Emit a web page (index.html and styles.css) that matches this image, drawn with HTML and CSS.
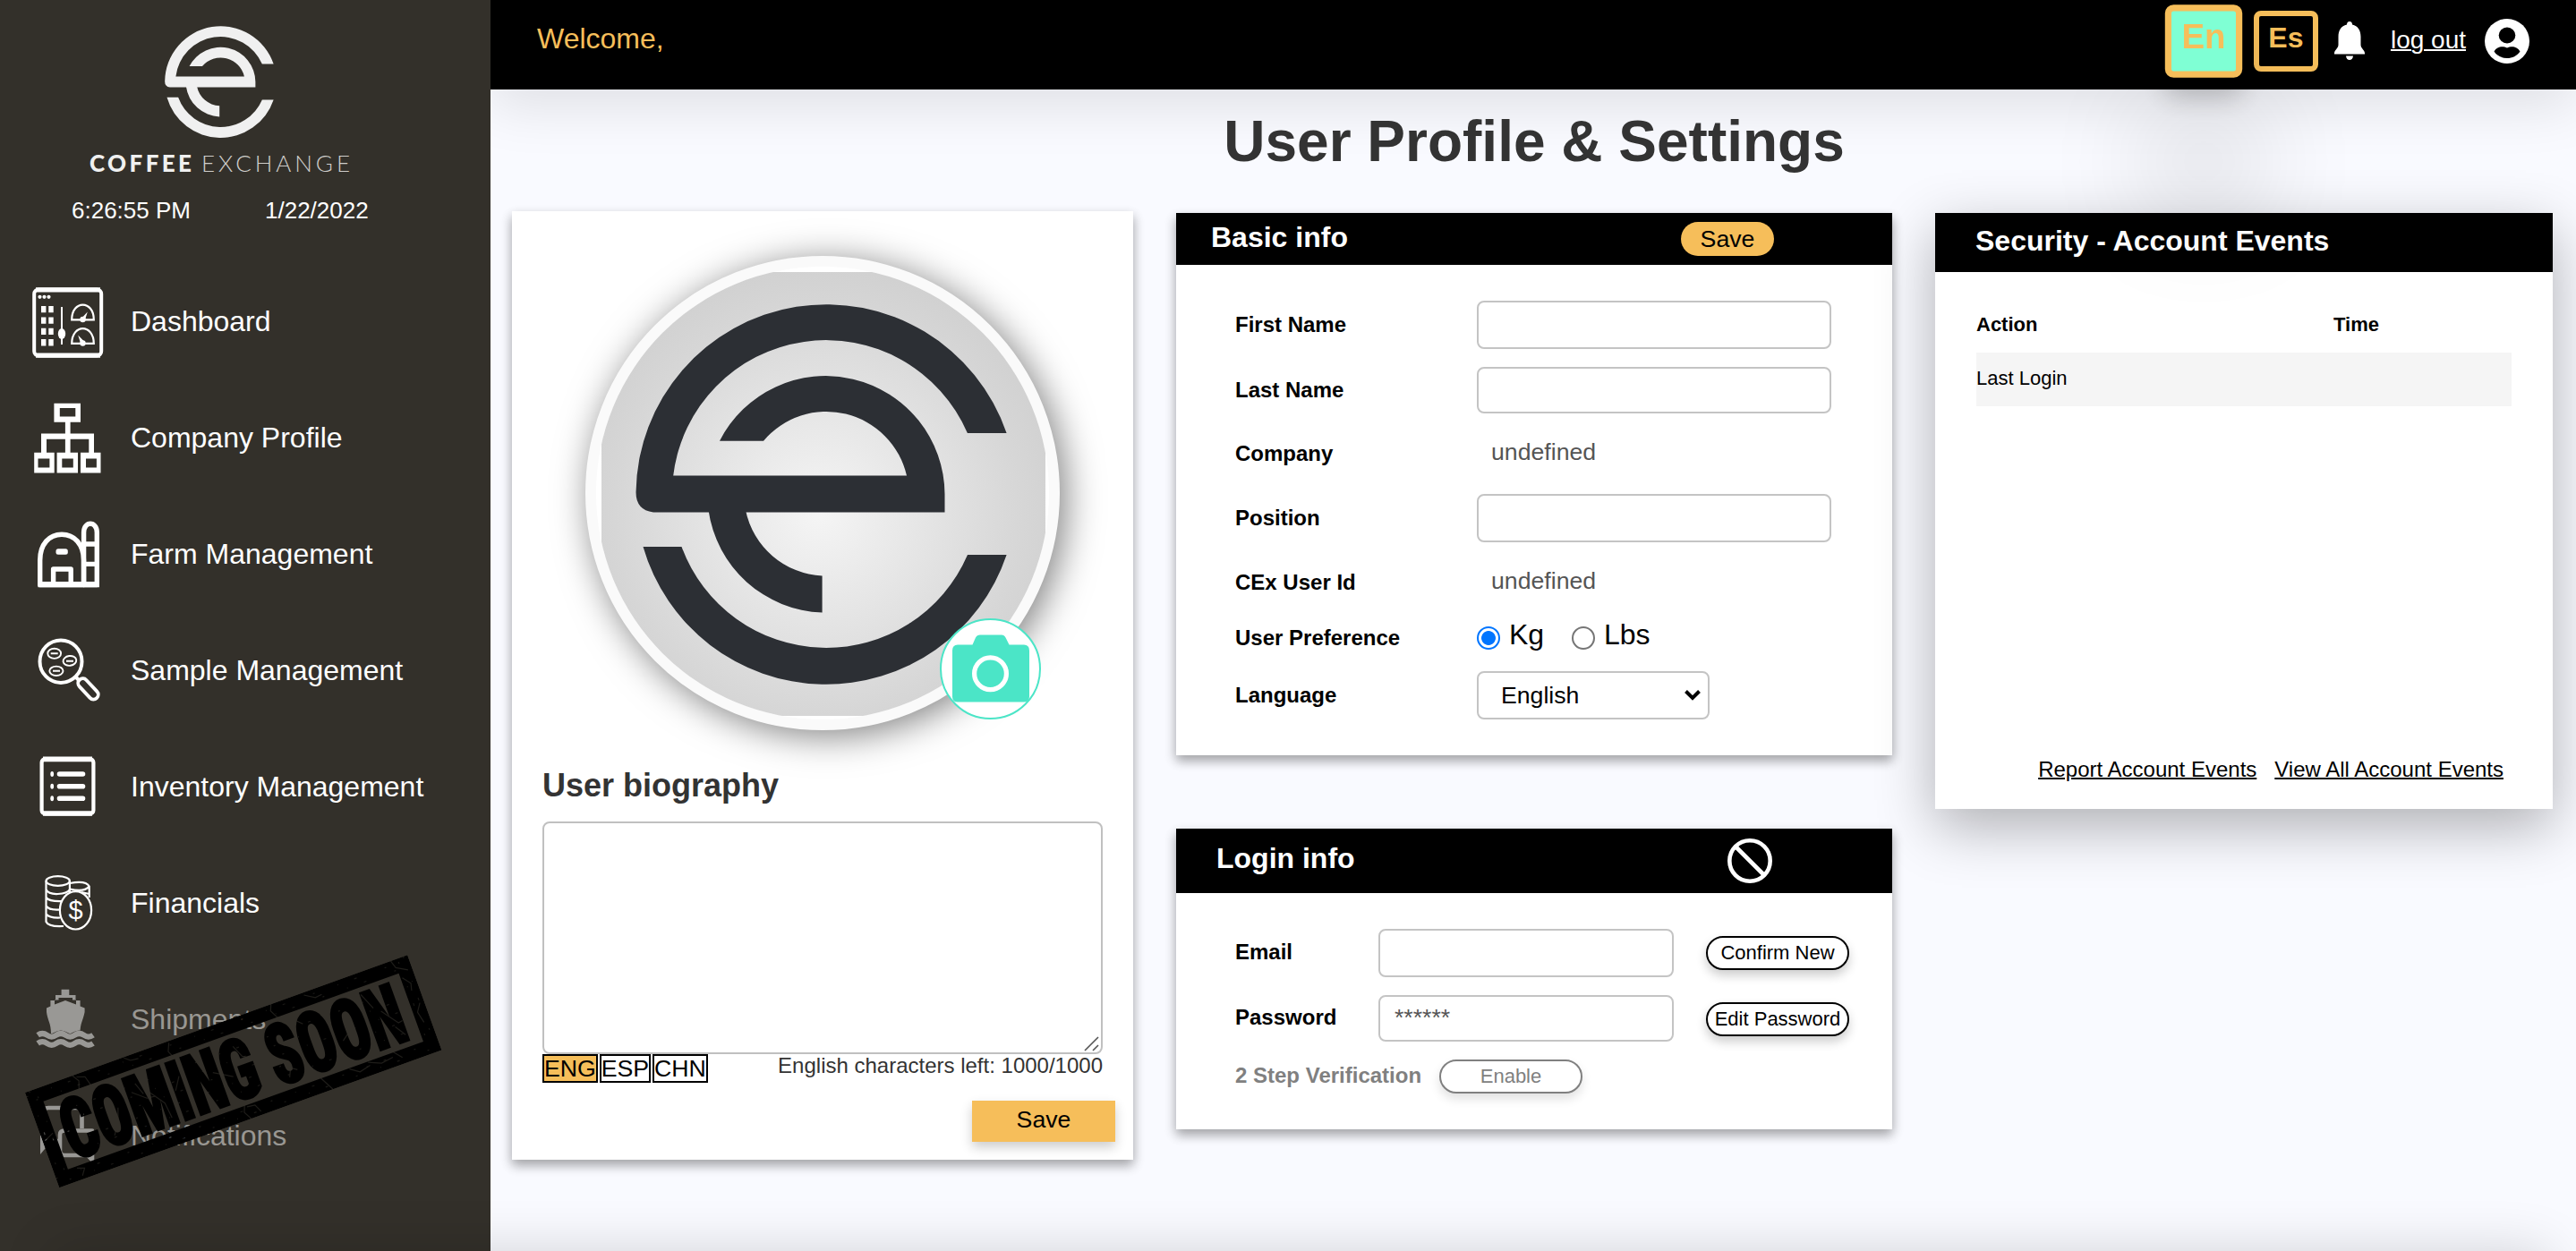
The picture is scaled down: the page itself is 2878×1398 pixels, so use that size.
FILE: index.html
```html
<!DOCTYPE html>
<html lang="en">
<head>
<meta charset="utf-8">
<title>User Profile &amp; Settings</title>
<link rel="stylesheet" href="styles.css">
</head>
<body>
<svg class="defs" width="0" height="0" aria-hidden="true">
  <symbol id="mark" viewBox="-213 -213 426 426">
    <path d="M201.6-68H157.9A172 172 0 0 0-170.8-20.5H90A92 92 0 0 0-70-59.3H-119A133 133 0 0 1 132.5 0V20.5H-193Q-212.5 18-212.5-2A212.8 212.8 0 0 1 201.6-68Z"/>
    <path d="M-131.5 18A133 133 0 0 0-4.4 132.5V91.5A92 92 0 0 1-90 18Z"/>
    <path d="M-204.5 59H-161.5A172 172 0 0 0 158 68H201.6A212.8 212.8 0 0 1-204.5 59Z"/>
  </symbol>
</svg>
<div class="app">
  <aside class="sidebar">
    <div class="brand">
      <svg class="brand-mark"><use href="#mark"/></svg>
      <svg class="brand-name" width="308" height="36">
        <text class="brand-bold" x="7" y="27" textLength="114">COFFEE</text>
        <text class="brand-thin" x="132" y="27" textLength="166">EXCHANGE</text>
      </svg>
    </div>
    <div class="clock"><span>6:26:55 PM</span><span>1/22/2022</span></div>
    <nav class="nav">
      <a class="nav-item">
        <svg class="nav-icon" viewBox="0 0 80 80">
          <rect x="2.2" y="3.5" width="75" height="74" rx="5" fill="none" stroke="#fff" stroke-width="4"/>
          <path d="M4 3.800H76M4 77.200H76" stroke="#fff" stroke-width="5.200"/>
          <g fill="#fff"><circle cx="8.500" cy="11.800" r="2.100"/><circle cx="13.500" cy="11.800" r="2.100"/><circle cx="18.500" cy="11.800" r="2.100"/>
          <path d="M10 22h5.400v7.200H10zM18.300 22h5.400v7.200h-5.400zM10 34.600h5.400v7.200H10zM18.300 34.600h5.400v7.200h-5.400zM10 46.800h5.400V54H10zM18.300 46.800h5.400V54h-5.400zM10 59h5.400v7.400H10zM18.300 59h5.400v7.400h-5.400z"/>
          <ellipse cx="33" cy="53" rx="4.200" ry="6"/><circle cx="56.500" cy="37" r="3.200"/><circle cx="56.500" cy="63.500" r="3.200"/>
          <path d="M54.800 36L61.800 28.500 58.800 38ZM58.500 62L51.200 54.500 54.500 65Z"/></g>
          <path d="M33 23V65" stroke="#fff" stroke-width="2"/>
          <path d="M44.200 37.300C44.200 15 68.800 15 68.800 37.300ZM44.200 63.900C44.200 41.600 68.800 41.600 68.800 63.900Z" fill="none" stroke="#fff" stroke-width="2.200"/>
        </svg><span>Dashboard</span></a>
      <a class="nav-item">
        <svg class="nav-icon" viewBox="0 0 80 80"><path fill="#fff" fill-rule="evenodd" d="M24.4.7H54V21.8H42.6V34.6H69V55.7H76.5V78.6H54V55.7H63.3V40.7H42.6V55.7H51V78.6H27.6V55.7H36.9V40.7H16V55.7H24.7V78.6H2.2V55.7H10V34.6H36.9V21.8H24.4ZM30.8 6V15.4H48.3V6ZM6.5 62.5V72.5H19.4V62.5ZM33.3 62.5V72.5H45.8V62.5ZM60 62.5V72.5H71.9V62.5Z"/></svg><span>Company Profile</span></a>
      <a class="nav-item">
        <svg class="nav-icon" viewBox="0 0 80 80"><g fill="none" stroke="#fff" stroke-width="5.4" stroke-linejoin="round">
          <path d="M8.7 73.5V46C8.7 28 19 17.2 33 17.2S57.5 28 57.5 46V73.5Z"/><path d="M57.6 73.5V15C57.6 2 72.3 2 72.3 15V73.5ZM57.6 28H72.3M57.6 50.4H72.3"/>
          <path d="M23.6 73V56H43.2V73"/><path d="M6.5 73.2H75" stroke-width="6.2" stroke-linecap="butt"/></g><rect x="26.5" y="33.3" width="13.3" height="6.4" rx="2.5" fill="#fff"/></svg><span>Farm Management</span></a>
      <a class="nav-item">
        <svg class="nav-icon" viewBox="0 0 80 80"><g fill="none" stroke="#fff">
          <ellipse cx="32" cy="29.2" rx="23.5" ry="23.7" stroke-width="4"/>
          <g stroke-width="1.9"><ellipse cx="24.7" cy="20.3" rx="7.4" ry="5.6"/><ellipse cx="41.9" cy="28.4" rx="7.4" ry="5.4" transform="rotate(-8 41.9 28.4)"/><ellipse cx="26.9" cy="39.8" rx="7.6" ry="5.2"/>
          <path d="M20.7 20.3h8M38 28.7h8M23 39.8h8"/></g>
          <path d="M49 47l4 4" stroke-width="4"/><rect x="48.5" y="54.6" width="28" height="10.6" rx="5.3" transform="rotate(47 62.5 59.9)" stroke-width="3.8"/></g></svg><span>Sample Management</span></a>
      <a class="nav-item">
        <svg class="nav-icon" viewBox="0 0 80 80"><g fill="none" stroke="#fff"><rect x="10.6" y="8" width="57.8" height="61.5" rx="4" stroke-width="4.2"/><path d="M12 8.4H67M12 69H67" stroke-width="5.6"/><path d="M30.5 25H56.5M30.5 38.7H56.5M30.5 52.3H56.5" stroke-width="5.6" stroke-linecap="round"/></g>
          <g fill="#fff"><ellipse cx="22.2" cy="25" rx="1.9" ry="3"/><ellipse cx="22.2" cy="38.7" rx="1.9" ry="3"/><ellipse cx="22.2" cy="52.3" rx="1.9" ry="3"/></g></svg><span>Inventory Management</span></a>
      <a class="nav-item">
        <svg class="nav-icon" viewBox="0 0 80 80"><g fill="none" stroke="#fff" stroke-width="2.2">
          <ellipse cx="28.7" cy="14.5" rx="13.2" ry="5.3"/><path d="M15.5 14.5V60Q18 66 35 65M41.9 14.5V27M15.5 24Q18 29.5 28.7 29T41.9 24M15.5 33Q19 38 36 37M15.5 42.5Q19 47.5 31 46.5M15.5 51.5Q19 56 31 55.5"/>
          <path d="M42 17Q60 13.5 63.7 20.5V33M42 23.5Q58 27.5 63.7 20.5M55 27L63.7 29"/></g>
          <ellipse cx="48.5" cy="47.3" rx="17.6" ry="21.2" fill="#33302a" stroke="#fff" stroke-width="2.2"/>
          <text class="coin" x="48.5" y="57" text-anchor="middle">$</text></svg><span>Financials</span></a>
      <a class="nav-item soon">
        <svg class="nav-icon" viewBox="0 0 80 80"><path fill="#fff" d="M32.6 5.7H41.3V12H48.5V18H53.6V24.500L58.600 26.500V31C57 40 53.500 43 53.500 55H21C21 43 17 40 16 31V26.500L20.400 24.500V18H26V12H32.600ZM25 22.500L37 18L49 22.500V17.500H45V15H29.500V17.500H25Z"/>
          <path d="M6.200 57.800q5.100-3.600 10.300 0t10.300 0 10.300 0 10.300 0 10.300 0 10.300 0" fill="none" stroke="#33302a" stroke-width="9"/>
          <path d="M6.200 56.800q5.100-3.600 10.300 0t10.300 0 10.300 0 10.300 0 10.300 0 10.300 0M6.200 66q5.100-3.600 10.300 0t10.300 0 10.300 0 10.300 0 10.300 0 10.300 0" fill="none" stroke="#fff" stroke-width="6.200"/></svg><span>Shipments</span></a>
      <a class="nav-item soon">
        <svg class="nav-icon" viewBox="0 0 80 80"><g fill="none" stroke="#fff" stroke-width="4.600" stroke-linejoin="round"><path d="M55.500 31V13Q55.500 8 50 8H18Q12.500 8 12.500 13V45H31"/><path d="M67 33.500H36Q31 33.500 31 38V56Q31 61 36 61H62L67 66Z"/></g><path d="M9 38V60L19 48ZM59 60L69 72V58Z" fill="#fff"/></svg><span>Notifications</span></a>
    </nav>
    <svg class="stamp" viewBox="0 0 454 113">
      <mask id="worn"><rect width="454" height="113" fill="#fff"/>
        <g fill="none" stroke="#000" stroke-width="1.200" opacity=".6">
          <path d="M56 0l5 8-3 9M60 3l9 3 3 11M117 1l6 5 9 1M170 2l-4 9 3 7M292 0l-3 7 5 10M330 3l11 7 8-1M434 0l3 9 12 7M440 22l7 9-2 8M449 55l-6 9 3 13M3 58l11-5"/>
          <path d="M26 99l8 3-5 7M226 96l-3 8 5 9M228 99l9 1 4 9M316 96l9 17M350 98l10 7 13-3M372 98l14 6 14-2M402 96l8 10"/>
          <path d="M78 79l9-14 5-14M112 40l14 12 10 1M119 32l5 14M131 47l12 17 2 18M168 41l-9 14M205 50l20 12M215 43l-3 27M236 30l6 14 9 6M285 72l10 7M290 71l-6 13M309 24l9 9M340 30l8 13M354 66l12-9M390 24l8 19M405 49l14 19 5-1M414 71l8 12M40 58l14-8"/>
        </g>
        <g fill="none" stroke="#000" stroke-width="1.200" stroke-dasharray="2 27 1 19 3 33" opacity=".5">
          <path d="M0 5H454M9 12H454M0 102H454M14 108H454M5 0V113M12 9V113M442 4V113M449 0V113M20 33H440M24 45H440M30 57H440M22 69H440M28 81H440"/>
        </g>
      </mask>
      <g mask="url(#worn)"><rect x="8" y="8" width="438" height="97" fill="none" stroke="#000" stroke-width="16"/>
        <text class="stamp-text" x="25" y="90" textLength="402" lengthAdjust="spacingAndGlyphs">COMING SOON</text></g>
    </svg>
  </aside>

  <div class="main">
    <header class="topbar">
      <span class="welcome">Welcome,</span>
      <button class="lang-switch active">En</button>
      <button class="lang-switch">Es</button>
      <svg class="bell" viewBox="0 0 34 44"><path fill="#fff" d="M17 0C19 0 20 1.500 20 3.500C26.500 5 29.500 10 29.500 17V26C29.500 30 34 32 34 35.500V36.500H0V35.500C0 32 4.500 30 4.500 26V17C4.500 10 7.500 5 14 3.500C14 1.500 15 0 17 0ZM13 38.500H21C20.500 44.500 13.500 44.500 13 38.500Z"/></svg>
      <a class="logout">log out</a>
      <svg class="user" viewBox="0 0 50 50"><circle cx="25" cy="25" r="25" fill="#fff"/><ellipse cx="25" cy="18.500" rx="9.300" ry="9"/><path d="M10.500 36.500C14 30 21 30.500 25 32.500C29 30.500 36 30 39.500 36.500C33 46.500 17 46.500 10.500 36.500Z"/></svg>
    </header>
    <h1 class="title">User Profile &amp; Settings</h1>
    <div class="columns">
      <section class="card bio">
        <div class="avatar">
          <div class="avatar-image"><svg class="avatar-mark"><use href="#mark"/></svg></div>
          <div class="camera"><svg viewBox="0 0 113 113"><path fill="#4be5c7" d="M20 29.500H36.500L40 21.500Q41.500 18.500 45 18.500H69Q72 18.500 73.500 21.500L77.500 29.500H94Q100 29.500 100 36V87.500Q100 93.500 94 93.500H20Q14 93.500 14 87.500V36Q14 29.500 20 29.500Z"/><circle cx="56.500" cy="61.700" r="17.900" fill="none" stroke="#fff" stroke-width="5.200"/></svg></div>
        </div>
        <h2 class="bio-title">User biography</h2>
        <div class="bio-field"><textarea class="bio-text"></textarea><svg class="grip" viewBox="0 0 18 18"><path d="M1 16L16 1M10 16L16 10" stroke="#555" stroke-width="1.600"/></svg></div>
        <div class="bio-meta">
          <span class="tab on">ENG</span><span class="tab">ESP</span><span class="tab">CHN</span>
          <span class="left">English characters left: 1000/1000</span>
        </div>
        <button class="save-block">Save</button>
      </section>

      <div class="stack">
        <section class="card basic">
          <div class="card-head basic-head"><h2>Basic info</h2><button class="save-pill">Save</button></div>
          <div class="basic-form">
            <label>First Name</label><input class="field">
            <label>Last Name</label><input class="field short">
            <label>Company</label><span class="value">undefined</span>
            <label>Position</label><input class="field">
            <label>CEx User Id</label><span class="value">undefined</span>
            <label>User Preference</label>
            <div class="radios"><input type="radio" name="unit" checked><span>Kg</span><input type="radio" name="unit"><span>Lbs</span></div>
            <label>Language</label>
            <div class="select"><span>English</span><svg width="20" height="14" viewBox="0 0 20 14"><path d="M2.500 2.500L10 10L17.500 2.500" fill="none" stroke="#000" stroke-width="4"/></svg></div>
          </div>
        </section>
        <section class="card login">
          <div class="card-head login-head"><h2>Login info</h2><svg class="ban" viewBox="0 0 50 50"><circle cx="25" cy="25" r="22.700" fill="none" stroke="#fff" stroke-width="4.600"/><path d="M9 9L41 41" stroke="#fff" stroke-width="4.600"/></svg></div>
          <div class="login-form">
            <div class="login-row email"><label>Email</label><input class="field"><button class="pill">Confirm New</button></div>
            <div class="login-row password"><label>Password</label><input class="field short" value="******"><button class="pill">Edit Password</button></div>
            <div class="login-row two-step"><label>2 Step Verification</label><button class="pill">Enable</button></div>
          </div>
        </section>
      </div>

      <section class="security">
        <div class="card-head security-head"><h2>Security - Account Events</h2></div>
        <div class="events">
          <div class="event-head"><span>Action</span><span>Time</span></div>
          <div class="event-row"><span>Last Login</span></div>
        </div>
        <div class="links"><a>Report Account Events</a><a>View All Account Events</a></div>
      </section>
    </div>
  </div>
  <footer class="footer"></footer>
</div>
</body>
</html>
```
FILE: styles.css
```css
* { box-sizing: border-box; }
body { margin: 0; font-family: "Liberation Sans", Arial, sans-serif; color: #000; }
h1, h2 { margin: 0; }
button, input, textarea { font-family: inherit; margin: 0; }
button { padding: 0; }
.defs { position: absolute; }

.app { position: relative; display: flex; width: 2878px; height: 1398px; overflow: hidden; background: #f9faff; }

/* Sidebar */
.sidebar { position: relative; flex: none; width: 548px; background: #33302a; color: #fff; }
.brand { display: flex; flex-direction: column; align-items: center; height: 216px; padding: 29px 55px 0 0; }
.brand-mark { width: 125px; height: 125px; fill: #f0f0f0; }
.brand-name { margin-top: 11px; font-family: Lato, "Liberation Sans", sans-serif; font-size: 26px; fill: #f0f0f0; overflow: visible; }
.brand-bold { font-weight: 900; }
.brand-thin { font-weight: 300; fill: #cfcecb; }
.clock { display: flex; gap: 83px; height: 79px; padding-left: 80px; font-size: 26px; line-height: 38px; }
.nav { display: flex; flex-direction: column; }
.nav-item { display: flex; align-items: center; gap: 30px; height: 130px; padding-left: 36px; font-size: 32px; }
.nav-item span { padding-bottom: 2px; }
.nav-icon { flex: none; width: 80px; height: 80px; }
.soon { color: #999792; }
.soon .nav-icon { opacity: .5; }
.coin { font-size: 29px; fill: #fff; }
.stamp { position: absolute; left: 28px; top: 1221px; width: 454px; height: 113px; transform-origin: 0 0; transform: rotate(-19.8deg); overflow: visible; }
.stamp-text { font-family: Roboto, "Liberation Sans", sans-serif; font-size: 95px; font-weight: 900; font-stretch: 75%; stroke: #000; stroke-width: 2.5px; }

/* Top bar */
.main { flex: 1; }
.topbar { display: flex; align-items: center; height: 100px; padding: 0 52px 8px; background: #000; box-shadow: 0 20px 60px rgba(0, 0, 0, .1); }
.welcome { flex: 1; padding-bottom: 6px; font-size: 32px; color: #f6be5a; }
.lang-switch { width: 72px; height: 68px; margin-right: 20px; padding-bottom: 8px; border: 6px solid #f6be5a; border-radius: 8px; background: #000; color: #f6be5a; font-size: 32px; font-weight: 700; }
.lang-switch.active { background: #7fffd4; transform: scale(1.2); box-shadow: 0 17px 26px rgba(0, 0, 0, .22), 0 112px 108px rgba(0, 0, 0, .24); }
.bell { width: 34px; height: 44px; margin: 0 29px 0 -2px; }
.logout { margin-right: 21px; padding-bottom: 3px; color: #fff; font-size: 28px; text-decoration: underline; text-decoration-thickness: 2px; }
.user { width: 50px; height: 50px; }

.title { height: 136px; padding: 22px 0 0 2px; font-size: 64px; line-height: 72px; text-align: center; color: #333; }

/* Cards */
.columns { display: flex; gap: 48px; padding: 0 26px 0 24px; }
.card { background: #fff; box-shadow: 0 6px 12px rgba(0, 0, 0, .16), 0 6px 12px rgba(0, 0, 0, .23); }
.card-head { display: flex; background: #000; color: #fff; }
.card-head h2 { font-size: 32px; }

.bio { width: 694px; height: 1060px; padding: 50px 20px 0 34px; }
.avatar { position: relative; width: 530px; height: 530px; margin-left: 48px; padding: 6px; border: 12px solid #fafafa; border-radius: 50%; background: #fff; box-shadow: 6px 6px 40px rgba(0, 0, 0, .5); }
.avatar-image { display: flex; width: 496px; height: 496px; padding: 35px 0 0 38px; background: radial-gradient(circle at 49% 54%, #f5f5f5 0, #e6e6e6 30%, #d6d6d6 62%, #cbcbcb 88%); clip-path: circle(253px at 247px 247px); }
.avatar-mark { width: 426px; height: 426px; fill: #2c2f34; }
.camera { position: absolute; left: 384px; top: 393px; width: 113px; height: 113px; border: 2px solid #4be5c7; border-radius: 50%; background: #fff; }
.camera svg { display: block; width: 113px; height: 113px; margin: -2px; }
.bio-title { margin-top: 40px; font-size: 36px; line-height: 44px; color: #333; }
.bio-field { position: relative; width: 626px; height: 260px; margin-top: 18px; }
.bio-text { display: block; width: 626px; height: 260px; border: 2px solid #c0c0c0; border-radius: 8px; resize: none; background: #fff; }
.grip { position: absolute; right: 3px; bottom: 2px; width: 18px; height: 18px; }
.bio-meta { display: flex; gap: 2px; width: 626px; font-size: 26.67px; }
.tab { height: 32px; border: 2px solid #000; line-height: 28px; }
.tab.on { background: #f6be5a; }
.left { flex: 1; font-size: 24px; line-height: 26px; text-align: right; color: #333; }
.save-block { display: block; width: 160px; height: 46px; margin: 20px 0 0 auto; padding-bottom: 4px; border: 0; background: #f6be5a; font-size: 26.67px; box-shadow: 0 6px 12px rgba(0, 0, 0, .2); }

.stack { display: flex; flex-direction: column; gap: 82px; width: 800px; padding-top: 2px; }
.basic { height: 606px; }
.basic-head { height: 58px; padding: 10px 132px 0 39px; justify-content: space-between; }
.basic-head h2 { line-height: 34px; }
.save-pill { width: 104px; height: 38px; border: 0; border-radius: 19px; background: #f6be5a; font-size: 26.67px; line-height: 36px; }
label { padding-bottom: 1px; font-size: 24px; font-weight: 700; }
.basic-form { display: grid; grid-template-columns: 270px 396px; grid-template-rows: 74px 72px 70px 74px 70px 54px 74px; align-items: center; padding: 30px 0 0 66px; }
.field { width: 100%; height: 54px; padding: 0 16px; border: 2px solid #c4c4c4; border-radius: 8px; background: #fff; font-size: 26.67px; color: #555; }
.field.short { height: 52px; }
.value { padding: 0 0 4px 16px; font-size: 26.67px; color: #555; }
.radios { display: flex; align-items: center; font-size: 32px; }
.radios span { width: 70px; margin-left: 10px; padding: 0 0 8px 0; }
.radios input { appearance: none; width: 26px; height: 26px; border: 2px solid #767676; border-radius: 50%; background: #fff; }
.radios input:checked { border-color: #0075ff; background: radial-gradient(circle, #0075ff 7.5px, #fff 8.3px); }
.select { display: flex; align-items: center; justify-content: space-between; width: 260px; height: 54px; padding: 0 7px 0 25px; border: 2px solid #c4c4c4; border-radius: 8px; font-size: 26.67px; }

.login { height: 336px; }
.login-head { align-items: center; justify-content: space-between; height: 72px; padding: 0 134px 0 45px; }
.login-head h2 { padding-bottom: 6px; }
.ban { width: 50px; height: 50px; }
.login-form { padding: 30px 48px 0 66px; }
.login-row { display: flex; align-items: center; justify-content: space-between; }
.login-row label { width: 124px; padding-bottom: 2px; }
.login-row .field { width: 330px; }
.email { height: 74px; }
.password { height: 72px; }
.password .pill { margin-top: 2px; }
.password .field { padding-bottom: 2px; }
.two-step { height: 58px; justify-content: flex-start; gap: 20px; color: #808080; }
.two-step label { width: 208px; white-space: nowrap; }
.pill { width: 160px; height: 38px; padding-bottom: 1px; border: 2px solid #000; border-radius: 19px; background: #fff; color: #000; font-size: 22px; box-shadow: 0 6px 12px rgba(0, 0, 0, .2); }
.two-step .pill { border-color: #808080; color: #808080; box-shadow: 0 6px 12px rgba(0, 0, 0, .12); }

.security { display: flex; flex-direction: column; width: 690px; height: 666px; margin-top: 2px; background: #fff; box-shadow: 0 20px 60px rgba(0, 0, 0, .3); }
.security-head { height: 66px; padding: 12px 44px 0 45px; }
.security-head h2 { line-height: 38px; }
.events { flex: 1; padding: 42px 46px 0; font-size: 22px; }
.event-head { display: grid; grid-template-columns: 399px 1fr; height: 48px; font-weight: 700; line-height: 33px; }
.event-row { height: 60px; background: #f5f5f5; line-height: 57px; }
.links { display: flex; justify-content: flex-end; gap: 20px; height: 58px; padding-right: 55px; font-size: 24px; line-height: 28px; }
.links a { text-decoration: underline; text-decoration-thickness: 2px; }

/* The footer sits just past the fold; only its shadow shows. */
.footer { position: absolute; left: 60px; right: 30px; top: 1398px; height: 80px; box-shadow: 0 0 60px rgba(0, 0, 0, .16); }
```
